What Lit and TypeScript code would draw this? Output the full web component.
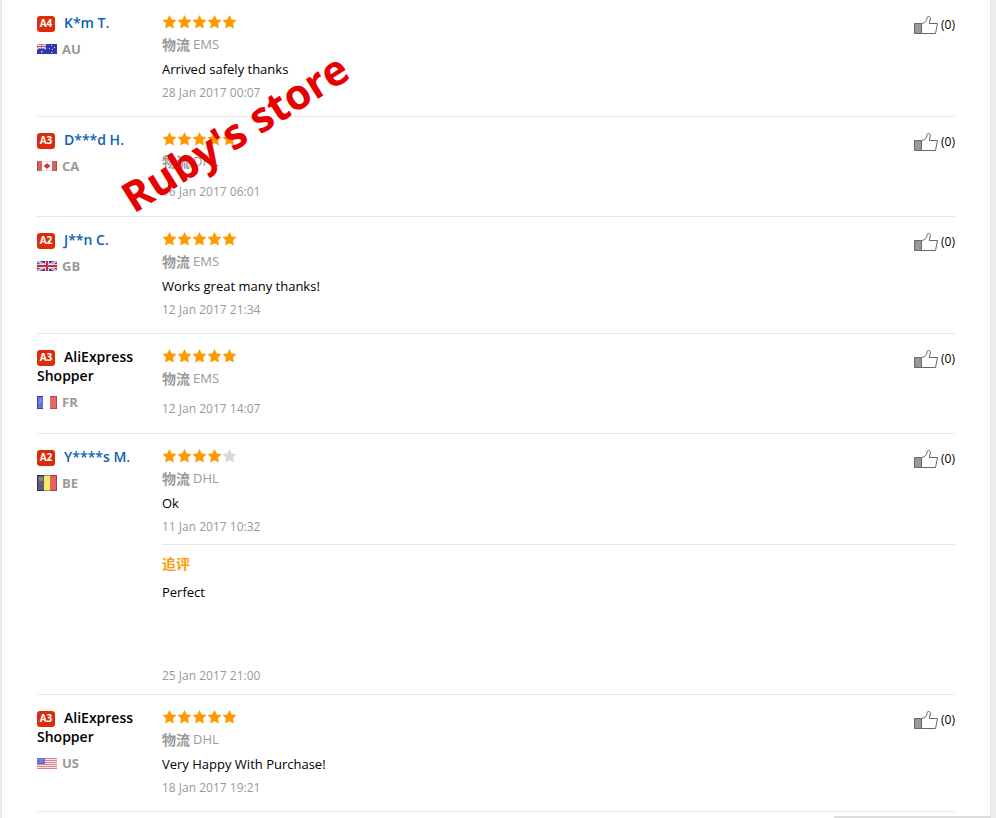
import { LitElement, html, css, svg, nothing } from "lit";
import { customElement, property } from "lit/decorators.js";
import { classMap } from "lit/directives/class-map.js";

interface Review {
  level: string;
  name: string;
  anonymous?: boolean;
  country: string;
  stars: number;
  carrier: string;
  text?: string;
  date: string;
  followUp?: { text: string; date: string };
}

const REVIEWS: Review[] = [
  { level: "A4", name: "K*m T.", country: "AU", stars: 5, carrier: "EMS", text: "Arrived safely thanks", date: "28 Jan 2017 00:07" },
  { level: "A3", name: "D***d H.", country: "CA", stars: 5, carrier: "DHL", date: "16 Jan 2017 06:01" },
  { level: "A2", name: "J**n C.", country: "GB", stars: 5, carrier: "EMS", text: "Works great many thanks!", date: "12 Jan 2017 21:34" },
  { level: "A3", name: "AliExpress Shopper", anonymous: true, country: "FR", stars: 5, carrier: "EMS", date: "12 Jan 2017 14:07" },
  {
    level: "A2", name: "Y****s M.", country: "BE", stars: 4, carrier: "DHL", text: "Ok", date: "11 Jan 2017 10:32",
    followUp: { text: "Perfect", date: "25 Jan 2017 21:00" },
  },
  { level: "A3", name: "AliExpress Shopper", anonymous: true, country: "US", stars: 5, carrier: "DHL", text: "Very Happy With Purchase!", date: "18 Jan 2017 19:21" },
];

const FLAGS: Record<string, { height: number; art: unknown }> = {
  AU: {
    height: 10,
    art: svg`<rect width="20" height="10" fill="#3438ae"/>
      <path d="M0 0L9 5M9 0L0 5" stroke="#e9dff0" stroke-width="1.4"/>
      <path d="M4.500 0V5M0 2.500H9" stroke="#fff" stroke-width="2"/>
      <path d="M4.500 0V5M0 2.500H9" stroke="#d8495c" stroke-width="1"/>
      <g fill="#c4c8ff"><rect x="4" y="7" width="1.500" height="1.500"/><rect x="14" y="1" width="1" height="1"/><rect x="12" y="4" width="1" height="1"/><rect x="17" y="3" width="1" height="1"/><rect x="15" y="5" width="1" height="1"/><rect x="14" y="8" width="1.300" height="1"/></g>`,
  },
  CA: {
    height: 10,
    art: svg`<rect width="20" height="10" fill="#fff"/>
      <path d="M0 0H5V10H0zM15 0H20V10H15z" fill="#cf6464"/>
      <path d="M.5 0V10M19.500 0V10" stroke="#a94b4b"/>
      <path d="M5 .5H15M5 9.500H15" stroke="#eee4e4"/>
      <path d="M10 1.500L11 3.500L12 3L11.800 4.500L13.500 4L13 5.500L11 7H10.400V8.500H9.600V7H9L7 5.500L6.500 4L8.200 4.500L8 3L9 3.500Z" fill="#c93a3f"/>`,
  },
  GB: {
    height: 10,
    art: svg`<rect width="20" height="10" fill="#353a92"/>
      <path d="M0 0L20 10M20 0L0 10" stroke="#fff" stroke-width="2.200"/>
      <path d="M0 0L20 10M20 0L0 10" stroke="#d2455a" stroke-width=".8"/>
      <path d="M10 0V10M0 5H20" stroke="#fff" stroke-width="3.600"/>
      <path d="M10 0V10M0 5H20" stroke="#cf2940" stroke-width="2"/>`,
  },
  FR: {
    height: 13,
    art: svg`<rect width="20" height="13" fill="#fff"/>
      <rect width="6" height="13" fill="#6a70e2"/><rect x="13" width="7" height="13" fill="#e06a6a"/>
      <path d="M.5 0V13M0 .5H6M0 12.500H6" stroke="#3c429f" fill="none"/>
      <path d="M19.500 0V13M13 .5H20M13 12.500H20" stroke="#b84444" fill="none"/>
      <path d="M3 3L4 5L2 7" stroke="#a6abf5" fill="none"/>`,
  },
  BE: {
    height: 16,
    art: svg`<rect width="7" height="16" fill="#5f5b78"/><rect x="7" width="6" height="16" fill="#f5e96a"/>
      <rect x="13" width="7" height="16" fill="#e56068"/>
      <path d="M2 2H6V6H2Z" fill="#7f8a86"/>
      <path d="M.5 0V16M0 .5H7M0 15.500H7" stroke="#343244" fill="none"/>
      <path d="M7 .5H13M7 15.500H13" stroke="#a89c45" fill="none"/>
      <path d="M19.500 0V16M13 .5H20M13 15.500H20" stroke="#a8404a" fill="none"/>`,
  },
  US: {
    height: 11,
    art: svg`<rect width="20" height="11" fill="#f7e6e8"/>
      <path d="M0 .5H20M0 2.500H20M0 4.500H20M0 6.500H20M0 8.500H20M0 10.500H20" stroke="#dd8088"/>
      <rect width="8" height="6" fill="#6670c4"/>
      <path d="M1 1.500H7M1 3.500H7" stroke="#98a0e2" stroke-dasharray="1 1"/>`,
  },
};

@customElement("star-rating")
export class StarRating extends LitElement {
  @property({ type: Number }) value = 5;

  static styles = css`
    :host { display: block; height: 20px; }
    .stars { display: flex; align-items: center; height: 20px; }
    .star { width: 15px; height: 14px; fill: #f90; }
    .star.empty { fill: #d8d8d8; }
  `;

  render() {
    return html`<div class="stars" role="img" aria-label="${this.value} / 5">
      ${[1, 2, 3, 4, 5].map(
        (n) => html`<svg class=${classMap({ star: true, empty: n > this.value })} viewBox="0 0 15 14">
          <path d="M7.500 0L9.700 4.400L14.500 5.100L11 8.500L11.900 13.500L7.500 11.200L3.100 13.500L4 8.500L.5 5.100L5.300 4.400Z" />
        </svg>`
      )}
    </div>`;
  }
}

@customElement("review-row")
export class ReviewRow extends LitElement {
  @property({ attribute: false }) review!: Review;

  static styles = css`
    :host { display: block; }
    .row {
      display: grid;
      grid-template-columns: 101px minmax(0, 1fr);
      column-gap: 24px;
      padding: 12px 0;
      border-bottom: 1px solid #e6e6e6;
      line-height: 20px;
    }
    .row.silent { padding-bottom: 13px; }
    .row.extended { padding-bottom: 7px; }
    .buyer { padding-top: 1px; }
    .name { font-size: 14px; font-weight: 600; line-height: 19px; color: #000; }
    .name a { color: #0a62b5; text-decoration: none; }
    .level {
      display: inline-block;
      box-sizing: border-box;
      width: 18px;
      height: 16px;
      margin: 3px 9px 0 0;
      border-radius: 3px;
      background: #dd2c0a;
      color: #fff;
      font-size: 10px;
      font-weight: 700;
      line-height: 15px;
      text-align: center;
      vertical-align: top;
    }
    .country {
      display: flex;
      align-items: center;
      gap: 5px;
      margin-top: 7px;
      color: #999;
      font-weight: 700;
    }
    .flag { flex: none; }
    .head { display: flex; justify-content: space-between; align-items: flex-start; }
    .label { font-family: "Noto Sans CJK SC", sans-serif; font-size: 14px; font-weight: 700; line-height: 20px; }
    .shipping { display: flex; gap: 3px; margin-top: 2px; color: #999; }
    .text { margin: 5px 0 3px; color: #000; }
    .date { display: block; color: #999; font-size: 12px; line-height: 22px; }
    .blank { margin-top: 10px; }
    .like {
      display: flex;
      align-items: center;
      gap: 3px;
      height: 25px;
      padding: 0;
      border: 0;
      background: none;
      color: #000;
      font: inherit;
      font-size: 12px;
      cursor: pointer;
    }
    .thumb { width: 24px; height: 18px; }
    .follow { margin-top: 6px; padding-top: 8px; border-top: 1px solid #e6e6e6; }
    .follow .label { color: #f90; }
    .follow .text { margin: 9px 0 63px; }
  `;

  render() {
    const r = this.review;
    const flag = FLAGS[r.country];
    return html`<article class=${classMap({ row: true, silent: !r.text, extended: !!r.followUp })}>
      <div class="buyer">
        <div class="name"><span class="level">${r.level}</span>${r.anonymous ? r.name : html`<a href="#">${r.name}</a>`}</div>
        <div class="country">
          <svg class="flag" width="20" height=${flag.height} viewBox="0 0 20 ${flag.height}" aria-hidden="true">${flag.art}</svg>
          <span>${r.country}</span>
        </div>
      </div>
      <div>
        <div class="head">
          <div>
            <star-rating .value=${r.stars}></star-rating>
            <div class="shipping"><span class="label">物流</span><span>${r.carrier}</span></div>
          </div>
          <button class="like" type="button">
            <svg class="thumb" viewBox="0 0 24 18" aria-hidden="true">
              <path d="M.5 7.500H7.500V17.500H.5Z" fill="#999" stroke="#666" />
              <path d="M7.500 7.500C10 7.500 13 5 13 2.500C13 .9 13.600 .5 14.500 .5C16 .5 16.500 1.500 16.300 3L15.300 7.500H23.500L21.500 17.500H7.500Z" fill="#fff" stroke="#666" />
            </svg>
            <span>(0)</span>
          </button>
        </div>
        ${r.text ? html`<div class="text">${r.text}</div>` : nothing}
        <time class=${classMap({ date: true, blank: !r.text })}>${r.date}</time>
        ${r.followUp
          ? html`<div class="follow">
              <div class="label">追评</div>
              <div class="text">${r.followUp.text}</div>
              <time class="date">${r.followUp.date}</time>
            </div>`
          : nothing}
      </div>
    </article>`;
  }
}

@customElement("app-root")
export class AppRoot extends LitElement {
  static styles = css`
    :host {
      display: block;
      position: relative;
      min-height: 100vh;
      box-sizing: border-box;
      padding: 0 5px 0 1px;
      overflow: hidden;
      background: #eee;
      font-family: "Open Sans", "Noto Sans CJK SC", sans-serif;
      font-size: 13px;
    }
    .panel {
      box-sizing: border-box;
      min-height: 100vh;
      padding: 0 35px;
      border: solid #e2e2e2;
      border-width: 0 1px;
      background: #fff;
    }
    .watermark {
      position: absolute;
      left: 137px;
      top: 175px;
      color: #e60000;
      font-size: 42px;
      font-weight: 700;
      line-height: 44px;
      white-space: nowrap;
      transform: rotate(-32deg);
      transform-origin: 0 100%;
      pointer-events: none;
    }
    .edge { position: absolute; right: 5px; bottom: 0; width: 157px; height: 2px; background: #ddd; }
  `;

  render() {
    return html`<main class="panel">
        ${REVIEWS.map((r) => html`<review-row .review=${r}></review-row>`)}
      </main>
      <div class="watermark">Ruby's store</div>
      <div class="edge"></div>`;
  }
}
